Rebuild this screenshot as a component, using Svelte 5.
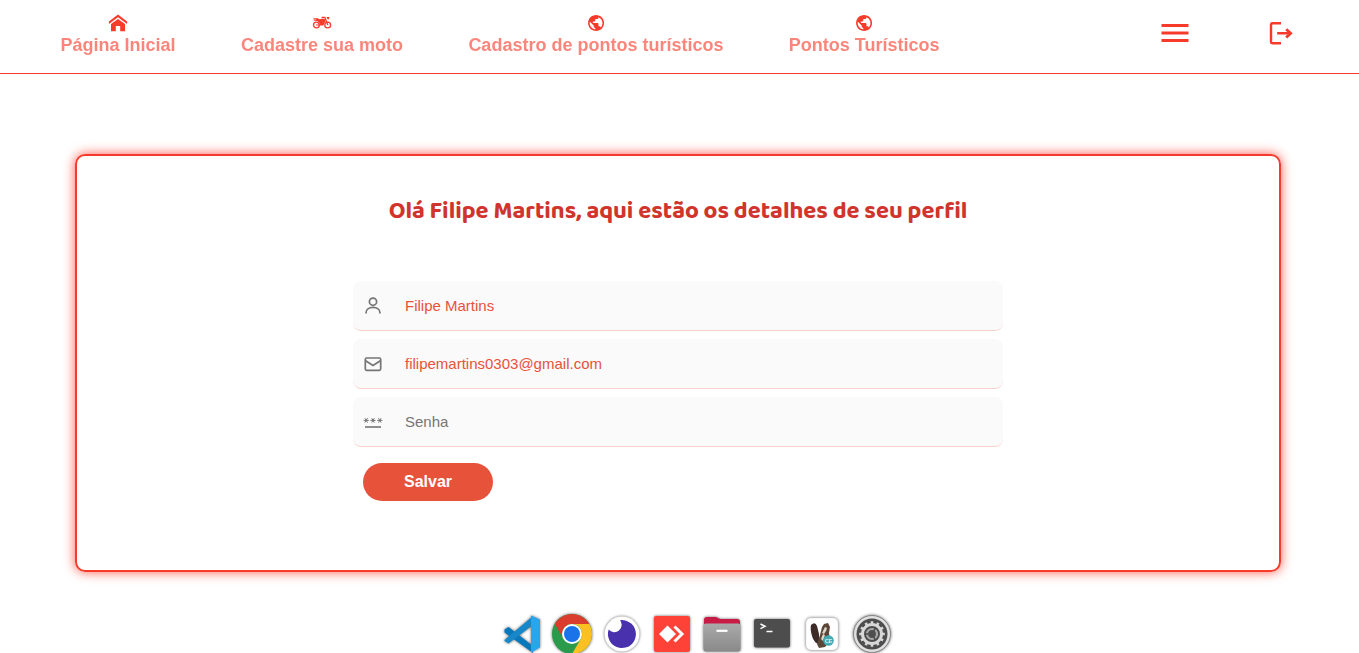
<script>
  const links = [
    { label: 'Página Inicial', icon: 'home' },
    { label: 'Cadastre sua moto', icon: 'moto' },
    { label: 'Cadastro de pontos turísticos', icon: 'globe' },
    { label: 'Pontos Turísticos', icon: 'globe' }
  ];
  let name = $state('Filipe Martins');
  let email = $state('filipemartins0303@gmail.com');
  let password = $state('');
  const teeth = Array.from({ length: 12 }, (_, i) => i * 30);
</script>

<div class="page">
  <header>
    <nav>
      {#each links as link}
        <a href="#top">
          {#if link.icon === 'home'}
            <svg viewBox="0 0 20 20" width="20" height="20"><path d="M.9 9.900V7.500L10 .6l9.100 6.900v2.400L10 3.300zM3 10l7-5 7 5v7.200h-4.800V12H7.800v5.200H3z" /></svg>
          {:else if link.icon === 'moto'}
            <svg viewBox="0 0 20 20" width="20" height="20">
              <g fill="none" stroke="currentColor" stroke-width="1.300"><circle cx="4.400" cy="11" r="2.900" /><circle cx="15.700" cy="11" r="2.900" /><path d="M9.500 3.400h3.400l2.900 7.500" /></g>
              <path d="M1.400 4.300h4.400l1.800 1 3.500-.7 1.900.7.5 1.600-2.200 4.600H8L7.200 8.500 5.300 7.100H1.200l1-.9h2.200l-.8-.7H1.400zM14.600 3h2.600v2.400l-2.100-.6zM4 10.400h4v1.100H4z" />
            </svg>
          {:else}
            <svg viewBox="0 0 25 25" width="20" height="20"><path transform="translate(.6 -.6)" d="M12 2C6.480 2 2 6.480 2 12s4.480 10 10 10 10-4.480 10-10S17.520 2 12 2zm-1 17.930c-3.950-.49-7-3.850-7-7.930 0-.62.080-1.210.210-1.790L9 15v1c0 1.100.9 2 2 2v1.930zm6.900-2.540c-.26-.81-1-1.390-1.900-1.390h-1v-3c0-.55-.45-1-1-1H8v-2h2c.55 0 1-.45 1-1V7h2c1.100 0 2-.9 2-2v-.410c2.930 1.190 5 4.060 5 7.410 0 2.080-.8 3.970-2.100 5.390z" /></svg>
          {/if}
          <span>{link.label}</span>
        </a>
      {/each}
    </nav>
    <div class="actions">
      <button aria-label="Menu"><svg viewBox="0 0 24 24" width="36" height="36"><path d="M3 18h18v-2H3v2zm0-5h18v-2H3v2zm0-7v2h18V6H3z" /></svg></button>
      <button aria-label="Sair"><svg viewBox="0 0 36 36" width="36" height="36"><g fill="none" stroke="currentColor" stroke-width="2.400"><path d="M18 8.200H9.500Q8 8.200 8 9.700v17q0 1.500 1.500 1.500H18M14.200 18.300h13" /><path stroke-width="2.800" d="m23.200 14.200 4.400 4.100-4.400 4.100" /></g></svg></button>
    </div>
  </header>

  <main>
    <h1>Olá Filipe Martins, aqui estão os detalhes de seu perfil</h1>
    <form onsubmit={(e) => e.preventDefault()}>
      <label>
        <svg viewBox="0 0 20 20" width="20" height="20" class="line"><circle cx="10" cy="5.700" r="3.600" /><path d="M3 17.500v-.6c0-3.500 3-5.500 7-5.500s7 2 7 5.500v.6" /></svg>
        <input bind:value={name} aria-label="Nome" />
      </label>
      <label>
        <svg viewBox="0 0 20 20" width="20" height="20" class="line"><rect x="2.300" y="4" width="15.400" height="12.300" rx="1.500" /><path d="M2.600 6.800 10 11.500l7.400-4.700" /></svg>
        <input bind:value={email} aria-label="Email" />
      </label>
      <label>
        <svg viewBox="0 0 20 20" width="20" height="20" class="line stars"><path class="rule" d="M2 15h16" />
          {#each [3.200, 10, 16.800] as x}
            <path d="M{x - 2.600} 8.400h5.200M{x - 1.300} 6.200l2.600 4.400M{x + 1.300} 6.200l-2.600 4.400" />
          {/each}
        </svg>
        <input type="password" placeholder="Senha" bind:value={password} />
      </label>
      <button class="save">Salvar</button>
    </form>
  </main>

  <footer>
    <svg viewBox="0 0 50 50"><path fill="#0878bd" d="m7.500 20.500 4-2.500L36 37v7L7.500 23.500z" /><path fill="#1687c9" d="m7.500 31L36 7v9L11.500 34.500l-4-2.500z" /><path fill="#29a5ed" d="m34 6.500 9 4v28l-9 5z" /></svg>
    <svg viewBox="0 0 50 50"><circle cx="25" cy="25" r="20" fill="#2a9b4b" /><path fill="#da3d2d" d="M7.700 15A20 20 0 0 1 42.300 15H25a10 10 0 0 0-9 14z" /><path fill="#fdc022" d="M25 15h17.300A20 20 0 0 1 25 45l8.700-15A10 10 0 0 0 25 15z" /><circle cx="25" cy="25" r="10" fill="#fff" /><circle cx="25" cy="25" r="8" fill="#1a73e8" /></svg>
    <svg viewBox="0 0 50 50"><circle cx="25" cy="25" r="17.500" fill="#fff" /><path fill="#4930ac" d="M23 11.200A14 14 0 1 1 11.700 20.500a6.300 6.300 0 1 0 11.300-9.300z" /></svg>
    <svg viewBox="0 0 50 50"><rect x="7" y="7" width="36" height="36" rx="2" fill="#ff4238" /><path fill="#fff" d="m12 25 8.500-8.500L29 25l-8.500 8.500z" /><path fill="none" stroke="#fff" stroke-width="3" d="m27.500 17.500 7.500 7.500-7.500 7.500" /></svg>
    <svg viewBox="0 0 50 50"><defs><linearGradient id="folder" x2="0" y2="1"><stop stop-color="#aaa" /><stop offset="1" stop-color="#898989" /></linearGradient></defs><path fill="#c81b46" d="M7 11q0-3 3-3h9l4 2h17q3 0 3 3v9H7z" /><rect x="6.500" y="14.500" width="37" height="28" rx="2.500" fill="url(#folder)" /><path d="M19.500 21.800h11" stroke="#fff" stroke-width="2.200" /></svg>
    <svg viewBox="0 0 50 50"><rect x="7" y="10" width="36" height="28.500" rx="2" fill="#4d4d4d" /><path fill="none" stroke="#fff" stroke-width="1.500" d="m13.500 15 4.500 2.300-4.500 2.300M19.500 22.500h6" /></svg>
    <svg viewBox="0 0 50 50"><rect x="9" y="9" width="32" height="32" rx="5" fill="#fff" stroke="#ddd" stroke-width=".5" /><path fill="#3d2b28" d="M14 16q4-4 6 1l2 8v10q-5-1-7-8-2-7-1-11z" /><path fill="#5b4638" d="m25 18 2-3 4-1 2 4-1 6 1 8-5 6-6 1-2-4 3-9z" /><path fill="#ded4c7" d="m28 18 2 1-1 3-2 3-2-1zm-2 7 2 1-2 6-2-2z" /><circle cx="31.500" cy="31.500" r="5.300" fill="#42aab2" /><text x="27.900" y="33.600" font-size="5.500" font-weight="700" fill="#d9f5f6">CE</text></svg>
    <svg viewBox="0 0 50 50"><circle cx="25" cy="25" r="18.500" fill="#e0e0e0" stroke="#858585" /><circle cx="25" cy="25" r="15.500" fill="#4e4e4e" /><g fill="none" stroke="#d8d8d8"><circle cx="25" cy="25" r="9.500" stroke-width="3" />{#each teeth as angle}<path stroke-width="2.500" d="M25 16v-3.800" transform="rotate({angle} 25 25)" />{/each}<circle cx="25" cy="25" r="5" stroke="#aaa" stroke-width="2.200" />{#each [30, 150, 270] as angle}<path stroke="#4e4e4e" stroke-width="1.600" d="M25 21.500v-4" transform="rotate({angle} 25 25)" />{/each}</g></svg>
  </footer>
</div>

<style>
  * { box-sizing: border-box; }
  :global(body) { margin: 0; }
  .page { height: 653px; overflow: hidden; background: #fff; font-family: "Liberation Sans", Arial, sans-serif; }
  header { height: 74px; border-bottom: 1px solid #f73b2b; display: flex; justify-content: space-between; color: #f73b2b; padding: 14px 60px 0 60.500px; }
  nav { display: flex; gap: 65.400px; }
  a { color: inherit; text-decoration: none; display: flex; flex-direction: column; align-items: center; font-size: 18px; font-weight: 700; line-height: 22px; white-space: nowrap; }
  a span { opacity: .62; }
  svg { display: block; fill: currentColor; flex: none; }
  .actions { display: flex; gap: 70px; padding-top: .500px; }
  button { border: 0; padding: 0; background: none; color: inherit; font-family: inherit; }
  .actions button { height: 36px; }
  main { height: 418px; margin: 80px 78px 0 75px; border: 2px solid #f73b2b; border-radius: 10px; box-shadow: 0 0 12px #ff5a4c; display: flex; flex-direction: column; align-items: center; }
  h1 { margin: 40px 0 54px; font: 700 24px/31px "Baloo 2", "Noto Sans", sans-serif; color: #d0342c; white-space: nowrap; }
  form { width: 650px; display: flex; flex-direction: column; gap: 8px; }
  label { height: 50px; background: #fafafa; border-bottom: 1px solid #fbd3cd; border-radius: 8px; display: flex; align-items: center; padding-left: 10px; gap: 22px; color: #757575; }
  .line { fill: none; stroke: currentColor; stroke-width: 1.700; }
  .stars { stroke-width: 1; }
  .rule { stroke-width: 1.600; }
  input { flex: 1; border: 0; outline: 0; padding: 0; background: transparent; font: 15px "Liberation Sans", Arial, sans-serif; color: #e7523a; }
  input::placeholder { color: #757575; }
  .save { width: 130px; height: 38px; margin: 8px 0 0 10px; border-radius: 19px; background: #e7523a; color: #fff; font-size: 16px; font-weight: 700; }
  footer { display: flex; margin: 37px 0 0 497px; }
  footer svg { width: 50px; height: 50px; filter: drop-shadow(0 0 1.500px #0009); }
</style>
